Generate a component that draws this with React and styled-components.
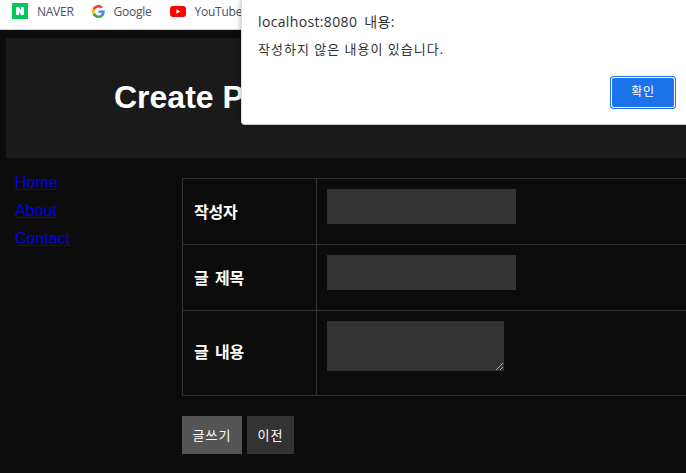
import React from "react";
import styled, { createGlobalStyle } from "styled-components";

const Global = createGlobalStyle`
  html, body { margin: 0; padding: 0; width: 686px; height: 473px; overflow: hidden; background: #0c0c0c; }
  * { box-sizing: border-box; }
`;
const KR = `"Noto Sans CJK KR", sans-serif`;
const UI = `"Open Sans", "Noto Sans CJK KR", sans-serif`;

const Page = styled.div`
  position: relative; width: 686px; height: 473px; overflow: hidden;
  background: #0c0c0c; font-family: "Liberation Sans", ${KR};
`;
const Bookmarks = styled.div`
  height: 30px; background: #fff; border-bottom: 1px solid #d6d6d6;
  display: flex; align-items: center; padding: 0 0 7px 12px; gap: 18px; margin-bottom: 8px;
`;
const Bookmark = styled.div`
  display: flex; align-items: center; gap: 9px;
  font: 12px "Open Sans", sans-serif; letter-spacing: -0.25px; color: #4a5160; white-space: nowrap;
`;
const Header = styled.header`
  margin-left: 6px; height: 120px; background: #1a1a1a; padding: 37px 0 0 108px;
  white-space: nowrap; overflow: hidden;
`;
const Title = styled.h1`
  margin: 0; font: bold 32px/44px "Liberation Sans", sans-serif; color: #fff;
`;
const Body = styled.div`display: flex;`;
const Nav = styled.nav`
  width: 182px; padding: 14px 0 0 15px; display: flex; flex-direction: column; gap: 6px;
  flex: none;
`;
const NavLink = styled.a`
  font: 16px/22px "Liberation Sans", sans-serif; color: #0000ee; text-decoration: underline; width: fit-content;
`;
const Main = styled.main`padding-top: 20px; flex: none;`;
const Table = styled.div`
  width: 600px; border: 1px solid #333; border-width: 1px 1px 0 1px;
`;
const Row = styled.div`
  display: grid; grid-template-columns: 134px 1fr; height: ${p => p.$h}px;
  border-bottom: 1px solid #333;
`;
const Label = styled.div`
  display: flex; align-items: center; padding: 0 0 ${p => p.$lift}px 11px; border-right: 1px solid #333;
  font: bold 16px ${KR}; letter-spacing: -0.2px; word-spacing: 3px; color: #fff;
`;
const Cell = styled.div`padding: 10px;`;
const Input = styled.div`width: 189px; height: 35px; background: #333;`;
const Area = styled.div`
  position: relative; width: 177px; height: 50px; background: #333;
`;
const Grip = styled.svg`position: absolute; right: 0; bottom: 0;`;
const Buttons = styled.div`display: flex; gap: 5px; margin-top: 20px;`;
const Btn = styled.button`
  height: 38px; width: ${p => p.$w}px; border: 0; padding: 0 0 2px;
  background: ${p => p.$bg}; color: #fff; font: 13px ${KR}; letter-spacing: 1.1px;
`;
const Dialog = styled.div`
  position: absolute; left: 241px; top: 0; width: 445px; height: 125px; background: #fff;
  border-bottom: 1px solid #c8c8c8; border-left: 1px solid #ddd; border-bottom-left-radius: 4px;
  box-shadow: 0 0 6px rgba(0,0,0,.3); padding: 12px 0 0 16px; overflow: hidden;
`;
const DTitle = styled.div`font: 14px/20px ${UI}; color: #303030; word-spacing: 3px; letter-spacing: 0.35px;`;
const DMsg = styled.div`font: 13px/18px ${UI}; color: #303030; margin-top: 8px; letter-spacing: 1px;`;
const DFoot = styled.div`display: flex; justify-content: flex-end; padding: 0 10px 0 0; margin-top: 18px;`;
const OK = styled.button`
  width: 66px; height: 33px; border-radius: 4px; background: #1a73e8; color: #fff; border: 0;
  box-shadow: inset 0 0 0 1px #1a73e8, inset 0 0 0 2px #fff; font: 12px ${UI}; letter-spacing: 0.7px; padding: 0 0 3px;
`;

const Naver = () => (
  <svg width="16" height="16" viewBox="0 0 16 16"><rect width="16" height="16" fill="#03c75a" /><path d="M4 4h3l2 3.500V4h3v8H9L7 8.500V12H4z" fill="#fff" /></svg>
);
const Google = () => (
  <svg width="13" height="13" viewBox="0 0 48 48">
    <path fill="#EA4335" d="M24 9.500c3.500 0 6.700 1.200 9.200 3.600l6.900-6.900C35.900 2.400 30.500 0 24 0 14.600 0 6.500 5.400 2.600 13.200l8 6.200C12.500 13.600 17.800 9.500 24 9.500z" />
    <path fill="#4285F4" d="M46.900 24.500c0-1.600-.1-3.100-.4-4.500H24v9h12.900c-.6 3-2.200 5.500-4.800 7.200l7.700 6c4.500-4.200 7.100-10.300 7.100-17.700z" />
    <path fill="#FBBC05" d="M10.500 28.600c-.5-1.400-.8-3-.8-4.600s.3-3.200.8-4.600l-8-6.200C.9 16.500 0 20.100 0 24s.9 7.500 2.600 10.800l7.900-6.200z" />
    <path fill="#34A853" d="M24 48c6.500 0 11.900-2.100 15.900-5.800l-7.700-6c-2.200 1.400-4.900 2.300-8.200 2.300-6.200 0-11.500-4.200-13.400-9.800l-8 6.200C6.500 42.600 14.600 48 24 48z" />
  </svg>
);
const YouTube = () => (
  <svg width="16" height="11" viewBox="0 0 16 11"><rect width="16" height="11" rx="3" fill="#f00" /><path d="M6.400 3.200v4.600L10.400 5.500z" fill="#fff" /></svg>
);

const rows = [["작성자", 66, false, 2], ["글 제목", 66, false, 2], ["글 내용", 85, true, 4]];

export default function App() {
  return (
    <Page>
      <Global />
      <Bookmarks>
        <Bookmark><Naver />NAVER</Bookmark>
        <Bookmark><Google />Google</Bookmark>
        <Bookmark><YouTube />YouTube</Bookmark>
      </Bookmarks>
      <Header><Title>Create Post</Title></Header>
      <Body>
        <Nav>
          <NavLink href="#">Home</NavLink>
          <NavLink href="#">About</NavLink>
          <NavLink href="#">Contact</NavLink>
        </Nav>
        <Main>
          <Table>
            {rows.map(([label, h, area, lift]) => (
              <Row key={label} $h={h}>
                <Label $lift={lift}>{label}</Label>
                <Cell>
                  {area ? (
                    <Area>
                      <Grip width="9" height="9" viewBox="0 0 9 9"><path d="M1 8L8 1M5 8L8 5" stroke="#aaa" strokeWidth="1" /></Grip>
                    </Area>
                  ) : <Input />}
                </Cell>
              </Row>
            ))}
          </Table>
          <Buttons>
            <Btn $w={60} $bg="#555">글쓰기</Btn>
            <Btn $w={47} $bg="#333">이전</Btn>
          </Buttons>
        </Main>
      </Body>
      <Dialog>
        <DTitle>localhost:8080 내용:</DTitle>
        <DMsg>작성하지 않은 내용이 있습니다.</DMsg>
        <DFoot><OK>확인</OK></DFoot>
      </Dialog>
    </Page>
  );
}
